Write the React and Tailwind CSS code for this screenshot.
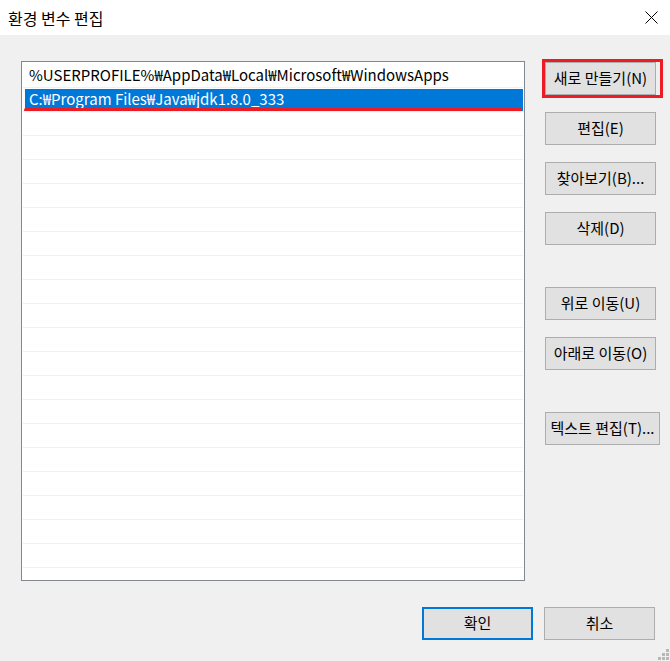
import React from 'react'

const paths = [
  '%USERPROFILE%₩AppData₩Local₩Microsoft₩WindowsApps',
  'C:₩Program Files₩Java₩jdk1.8.0_333',
]

const font = { fontFamily: '"Noto Sans CJK KR", "Noto Sans", sans-serif' }

const SideButton = ({ label, className = '', marked = false, wide = false }) => (
  <div className={`relative ${className}`}>
    <button
      className={`h-[33px] ${wide ? 'w-[115px]' : 'w-[111px]'} bg-[#e1e1e1] border border-[#adadad] text-[15px] text-black flex items-center justify-center whitespace-nowrap`}
    >
      {label}
    </button>
    {marked && (
      <div className="absolute -inset-[3px] border-[3px] border-[#ed1c24] pointer-events-none"></div>
    )}
  </div>
)

const App = () => {
  const rows = Array.from({ length: 22 }, (_, i) => paths[i] || '')

  return (
    <div className="w-[670px] h-[661px] bg-[#f0f0f0] flex flex-col relative overflow-hidden" style={font}>
      {/* title bar */}
      <div className="h-[35px] bg-white flex items-center justify-between pl-[8px] pr-[12px]">
        <span className="text-[16px] text-black">환경 변수 편집</span>
        <svg width="13" height="13" viewBox="0 0 13 13">
          <path d="M0.5 0.5 L12.5 12.5 M12.5 0.5 L0.5 12.5" stroke="#000" strokeWidth="1" />
        </svg>
      </div>

      <div className="flex pt-[26px] pl-[21px]">
        {/* path list */}
        <div className="w-[504px] h-[520px] bg-white border border-[#828790] p-[1px] overflow-hidden">
          {rows.map((text, i) => (
            <div
              key={i}
              className={`h-[24px] relative flex items-center ${i > 0 ? 'border-t border-[#f0f0f0]' : ''}`}
            >
              {i === 1 ? (
                <div className="absolute top-[1px] bottom-0 left-[2px] right-0 bg-[#0078d7]"></div>
              ) : null}
              <span className={`relative pl-[6px] text-[15px] whitespace-nowrap ${i === 1 ? 'text-white' : 'text-black'}`}>
                {text}
              </span>
              {i === 1 && (
                <div className="absolute left-[1px] right-[1px] bottom-[-1px] h-[4px] rounded-full bg-[#ed1c24]"></div>
              )}
            </div>
          ))}
        </div>

        {/* side buttons */}
        <div className="ml-[20px] flex flex-col pt-[1px]">
          <SideButton label="새로 만들기(N)" marked />
          <SideButton label="편집(E)" className="mt-[17px]" />
          <SideButton label="찾아보기(B)..." className="mt-[17px]" />
          <SideButton label="삭제(D)" className="mt-[17px]" />
          <SideButton label="위로 이동(U)" className="mt-[42px]" />
          <SideButton label="아래로 이동(O)" className="mt-[17px]" />
          <SideButton label="텍스트 편집(T)..." className="mt-[42px]" wide />
        </div>
      </div>

      {/* footer */}
      <div className="flex justify-end gap-[11px] pr-[15px] mt-[26px]">
        <button className="w-[111px] h-[33px] bg-[#e1e1e1] border-2 border-[#0078d7] text-[15px] text-black">확인</button>
        <button className="w-[111px] h-[33px] bg-[#e1e1e1] border border-[#adadad] text-[15px] text-black">취소</button>
      </div>

      {/* resize grip */}
      <div className="absolute right-[1px] bottom-[1px] grid grid-cols-3 gap-[1px]">
        <span className="w-[3px] h-[3px]"></span>
        <span className="w-[3px] h-[3px]"></span>
        <span className="w-[3px] h-[3px] bg-[#b8b8b8]"></span>
        <span className="w-[3px] h-[3px]"></span>
        <span className="w-[3px] h-[3px] bg-[#b8b8b8]"></span>
        <span className="w-[3px] h-[3px] bg-[#b8b8b8]"></span>
        <span className="w-[3px] h-[3px] bg-[#b8b8b8]"></span>
        <span className="w-[3px] h-[3px] bg-[#b8b8b8]"></span>
        <span className="w-[3px] h-[3px] bg-[#b8b8b8]"></span>
      </div>
    </div>
  )
}

export default App
